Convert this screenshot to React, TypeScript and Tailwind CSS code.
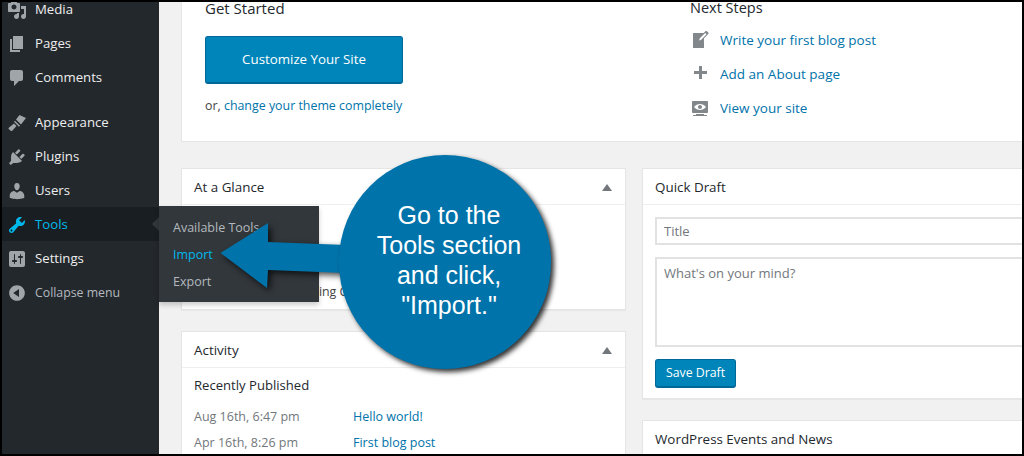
const icons = {
  media: 'M13 11V4c0-.55-.45-1-1-1h-1.67L9 1H5L3.67 3H2c-.55 0-1 .45-1 1v7c0 .55.45 1 1 1h10c.55 0 1-.45 1-1zM7 4.5c1.38 0 2.5 1.12 2.5 2.5S8.38 9.5 7 9.5 4.5 8.38 4.5 7 5.62 4.5 7 4.5zM14 6h5v10.5c0 1.38-1.12 2.5-2.5 2.5S14 17.88 14 16.5s1.12-2.5 2.5-2.5c.17 0 .34.02.5.05V9h-3V6zm-4 8.05V13h2v3.5c0 1.38-1.12 2.5-2.5 2.5S7 17.88 7 16.5 8.12 14 9.5 14c.17 0 .34.02.5.05z',
  pages: 'M6 15V2h10v13H6zm-1 1h8v2H3V5h2v11z',
  comments: 'M5 2h9c1.1 0 2 .9 2 2v7c0 1.1-.9 2-2 2h-2l-5 5v-5H5c-1.1 0-2-.9-2-2V4c0-1.1.9-2 2-2z',
  appearance: 'M1.5 15l5.5-4.5 2.5 2.5L5 18c-.8.5-4-2-3.5-3zM7 8.7l1-1 5 5-1 1zM9 6.5l3.5-4.5 6.5 3-5 6.5z',
  plugins: 'M13.11 4.36L9.87 7.6 8 5.73l3.24-3.24c.35-.34 1.05-.2 1.56.32.52.51.66 1.21.31 1.55zm-8 1.77l.91-1.12 9.01 9.01-1.19.84c-.71.71-2.63 1.16-3.82 1.16H6.14L4.9 17.26c-.59.59-1.54.59-2.12 0-.59-.58-.59-1.53 0-2.12l1.24-1.24v-3.88c0-1.13.4-3.19 1.09-3.89zm7.26 3.97l3.24-3.24c.34-.35 1.04-.21 1.55.31.52.51.66 1.21.31 1.55l-3.24 3.25z',
  users: 'M10 9.25c-2.27 0-2.73-3.44-2.73-3.44C7 4.02 7.82 2 9.97 2c2.16 0 2.98 2.02 2.71 3.81 0 0-.41 3.44-2.68 3.44zm0 2.57L12.72 10c2.39 0 4.52 2.33 4.52 4.53v2.49s-3.65 1.13-7.24 1.13c-3.65 0-7.24-1.13-7.24-1.13v-2.49c0-2.25 1.94-4.48 4.47-4.48z',
  tools: 'M16.68 9.77c-1.34 1.34-3.3 1.67-4.95.99l-5.41 6.52c-.99.99-2.59.99-3.58 0s-.99-2.59 0-3.57l6.52-5.42c-.68-1.65-.35-3.61.99-4.95 1.28-1.28 3.12-1.62 4.72-1.06l-2.89 2.89 2.82 2.82 2.86-2.87c.53 1.58.18 3.39-1.08 4.65zM3.81 16.21c.4.39 1.04.39 1.43 0 .4-.4.4-1.04 0-1.43-.39-.4-1.03-.4-1.43 0-.39.39-.39 1.03 0 1.43z',
  settings: 'M18 16V4c0-1.1-.9-2-2-2H4c-1.1 0-2 .9-2 2v12c0 1.1.9 2 2 2h12c1.1 0 2-.9 2-2zM8 11h1c.55 0 1 .45 1 1s-.45 1-1 1H8v1.5c0 .28-.22.5-.5.5s-.5-.22-.5-.5V13H6c-.55 0-1-.45-1-1s.45-1 1-1h1V5.5c0-.28.22-.5.5-.5s.5.22.5.5V11zm5-2h-1c-.55 0-1-.45-1-1s.45-1 1-1h1V5.5c0-.28.22-.5.5-.5s.5.22.5.5V7h1c.55 0 1 .45 1 1s-.45 1-1 1h-1v5.5c0 .28-.22.5-.5.5s-.5-.22-.5-.5V9z',
  collapse: 'M10 2.16c4.33 0 7.84 3.51 7.84 7.84s-3.51 7.84-7.84 7.84S2.16 14.33 2.16 10 5.71 2.16 10 2.16zm2 11.72V6.12L6.18 9.97z',
  write: 'M16.89 1.2l1.41 1.41c.39.39.39 1.02 0 1.41L14 8.33V18H3V3h10.67l1.8-1.8c.4-.39 1.03-.4 1.42 0zm-5.66 8.48l5.37-5.36-1.42-1.42-5.36 5.37-.71 2.12z',
  add: 'M17 7v3h-5v5H9v-5H4V7h5V2h3v5h5z',
  view: 'M18 14V4c0-.55-.45-1-1-1H3c-.55 0-1 .45-1 1v10c0 .55.45 1 1 1h14c.55 0 1-.45 1-1zm-8-8c2.3 0 4.4 1.14 6 3-1.6 1.86-3.7 3-6 3s-4.4-1.14-6-3c1.6-1.86 3.7-3 6-3zm2 3c0-1.1-.9-2-2-2s-2 .9-2 2 .9 2 2 2 2-.9 2-2zm2 8h3v1H3v-1h3v-1h8v1z',
};

const Icon = ({ d, className }: { d: string; className: string }) => (
  <svg viewBox="0 0 20 20" className={className} fill="currentColor">
    <path d={d} />
  </svg>
);

const MenuItem = ({ icon, label, active, muted }: { icon: string; label: string; active?: boolean; muted?: boolean }) => (
  <div className={`flex h-[34px] items-center gap-2 pl-[5px] pt-[2px] ${active ? 'bg-[#191e23] text-[#00b9eb]' : muted ? 'text-[#b4b9be]' : 'text-[#eeeeee]'}`}>
    <Icon d={icon} className={`h-5 w-5 ${active ? 'text-[#00b9eb]' : 'text-[#a0a5aa]'}`} />
    <span className={muted ? 'text-[12.3px]' : 'text-[13.2px]'}>{label}</span>
  </div>
);

const NextStep = ({ icon, label }: { icon: string; label: string }) => (
  <div className="flex h-[34px] items-center gap-[10px]">
    <Icon d={icon} className="h-5 w-5 text-[#82878c]" />
    <a className="text-[13.5px] text-[#0073aa]">{label}</a>
  </div>
);

const Panel = ({ title, toggle, className, children }: { title: string; toggle?: boolean; className: string; children?: React.ReactNode }) => (
  <div className={`border border-[#e5e5e5] bg-white shadow-[0_1px_1px_rgba(0,0,0,0.04)] ${className}`}>
    <div className="flex h-[36px] items-center justify-between border-b border-[#eeeeee] pl-[12px] pr-[13px] pt-[1px]">
      <h2 className="text-[13.4px] font-medium text-[#23282d]">{title}</h2>
      {toggle && <div className="h-0 w-0 border-x-[5px] border-b-[7px] border-x-transparent border-b-[#72777c]" />}
    </div>
    {children}
  </div>
);

const PrimaryButton = ({ label, className }: { label: string; className: string }) => (
  <button className={`rounded-[3px] border border-[#006799] border-b-2 bg-[#0085ba] text-white ${className}`}>{label}</button>
);

export default function App() {
  return (
    <div className="relative h-[456px] w-[1024px] overflow-hidden border-2 border-black bg-[#f1f1f1] font-['Open_Sans',sans-serif] text-[13px] text-[#444444]">
      <div className="flex h-full">
        <aside className="-mt-[10px] h-[480px] w-[157px] shrink-0 bg-[#23282d]">
          <MenuItem icon={icons.media} label="Media" />
          <MenuItem icon={icons.pages} label="Pages" />
          <MenuItem icon={icons.comments} label="Comments" />
          <div className="h-[11px]" />
          <MenuItem icon={icons.appearance} label="Appearance" />
          <MenuItem icon={icons.plugins} label="Plugins" />
          <MenuItem icon={icons.users} label="Users" />
          <MenuItem icon={icons.tools} label="Tools" active />
          <MenuItem icon={icons.settings} label="Settings" />
          <MenuItem icon={icons.collapse} label="Collapse menu" muted />
        </aside>

        <main className="min-w-0 flex-1 pl-[22px]">
          <section className="-mt-[40px] flex h-[180px] w-[900px] border border-[#e5e5e5] bg-white pl-[23px] pt-[33px]">
            <div className="w-[485px]">
              <h2 className="text-[15px] leading-[24px] text-[#23282d]">Get Started</h2>
              <PrimaryButton label="Customize Your Site" className="mt-[16px] block h-[48px] w-[198px] text-[13.3px]" />
              <p className="mt-[13px] text-[12.4px] leading-[18px]">
                or, <a className="text-[#0073aa]">change your theme completely</a>
              </p>
            </div>
            <div>
              <h2 className="text-[14.5px] leading-[24px] text-[#23282d]">Next Steps</h2>
              <div className="mt-[3px]">
                <NextStep icon={icons.write} label="Write your first blog post" />
                <NextStep icon={icons.add} label="Add an About page" />
                <NextStep icon={icons.view} label="View your site" />
              </div>
            </div>
          </section>

          <div className="mt-[26px] grid w-[900px] grid-cols-[445px_445px] gap-x-[16px]">
            <div>
              <Panel title="At a Glance" toggle className="h-[142px]">
                <p className="pl-[12px] pt-[78px] text-[12.4px] whitespace-nowrap text-[#444444]">WordPress 4.9.1 running Customizr theme.</p>
              </Panel>
              <Panel title="Activity" toggle className="mt-[21px] h-[200px]">
                <div className="px-[12px]">
                  <h3 className="mt-[7px] text-[13.1px] leading-[20px] text-[#23282d]">Recently Published</h3>
                  <div className="mt-[12px] grid grid-cols-[159px_1fr] gap-y-[6px] text-[12.5px] leading-[20px]">
                    <span className="text-[#72777c]">Aug 16th, 6:47 pm</span>
                    <a className="text-[#0073aa]">Hello world!</a>
                    <span className="text-[#72777c]">Apr 16th, 8:26 pm</span>
                    <a className="text-[#0073aa]">First blog post</a>
                  </div>
                </div>
              </Panel>
            </div>
            <div>
              <Panel title="Quick Draft" className="h-[231px]">
                <div className="px-[12px] pt-[12px]">
                  <input placeholder="Title" className="block h-[28px] w-full border-2 border-[#e2e2e2] px-[7px] text-[13px] placeholder:text-[#72777c]" />
                  <textarea placeholder="What's on your mind?" className="mt-[12px] block h-[90px] w-full resize-none border-2 border-[#e2e2e2] px-[7px] py-[5px] text-[13px] placeholder:text-[#72777c]" />
                  <PrimaryButton label="Save Draft" className="mt-[12px] block h-[29px] w-[81px] text-[12.3px]" />
                </div>
              </Panel>
              <Panel title="WordPress Events and News" className="mt-[21px] h-[100px]" />
            </div>
          </div>
        </main>
      </div>

      <div className="absolute left-[150px] top-[214px] h-0 w-0 border-y-[8px] border-r-[8px] border-y-transparent border-r-[#32373c]" />
      <div className="absolute left-[157px] top-[204px] flex h-[96px] w-[160px] flex-col justify-center gap-[8px] bg-[#32373c] pl-[14px] text-[12.5px] leading-[19px] text-[#b4b9be] shadow-[0_3px_5px_rgba(0,0,0,0.2)]">
        <span>Available Tools</span>
        <span className="text-[#00b9eb]">Import</span>
        <span>Export</span>
      </div>

      <svg viewBox="218 218 130 75" className="absolute left-[216px] top-[216px] h-[75px] w-[130px] overflow-visible drop-shadow-[3px_3px_3px_rgba(0,0,0,0.7)]">
        <polygon points="220.5,253 268,223 268,242 346,245 346,273 268,270 267,288" fill="#0073aa" />
      </svg>

      <div className="absolute left-[337px] top-[153px] flex h-[214px] w-[212px] items-center justify-center rounded-full bg-[#0073aa] pb-[4px] pl-[8px] text-center font-['Liberation_Sans',sans-serif] text-[25px] leading-[30px] text-white shadow-[3px_3px_5px_rgba(0,0,0,0.8)]">
        <p>
          Go to the
          <br />
          Tools section
          <br />
          and click,
          <br />
          "Import."
        </p>
      </div>
    </div>
  );
}
